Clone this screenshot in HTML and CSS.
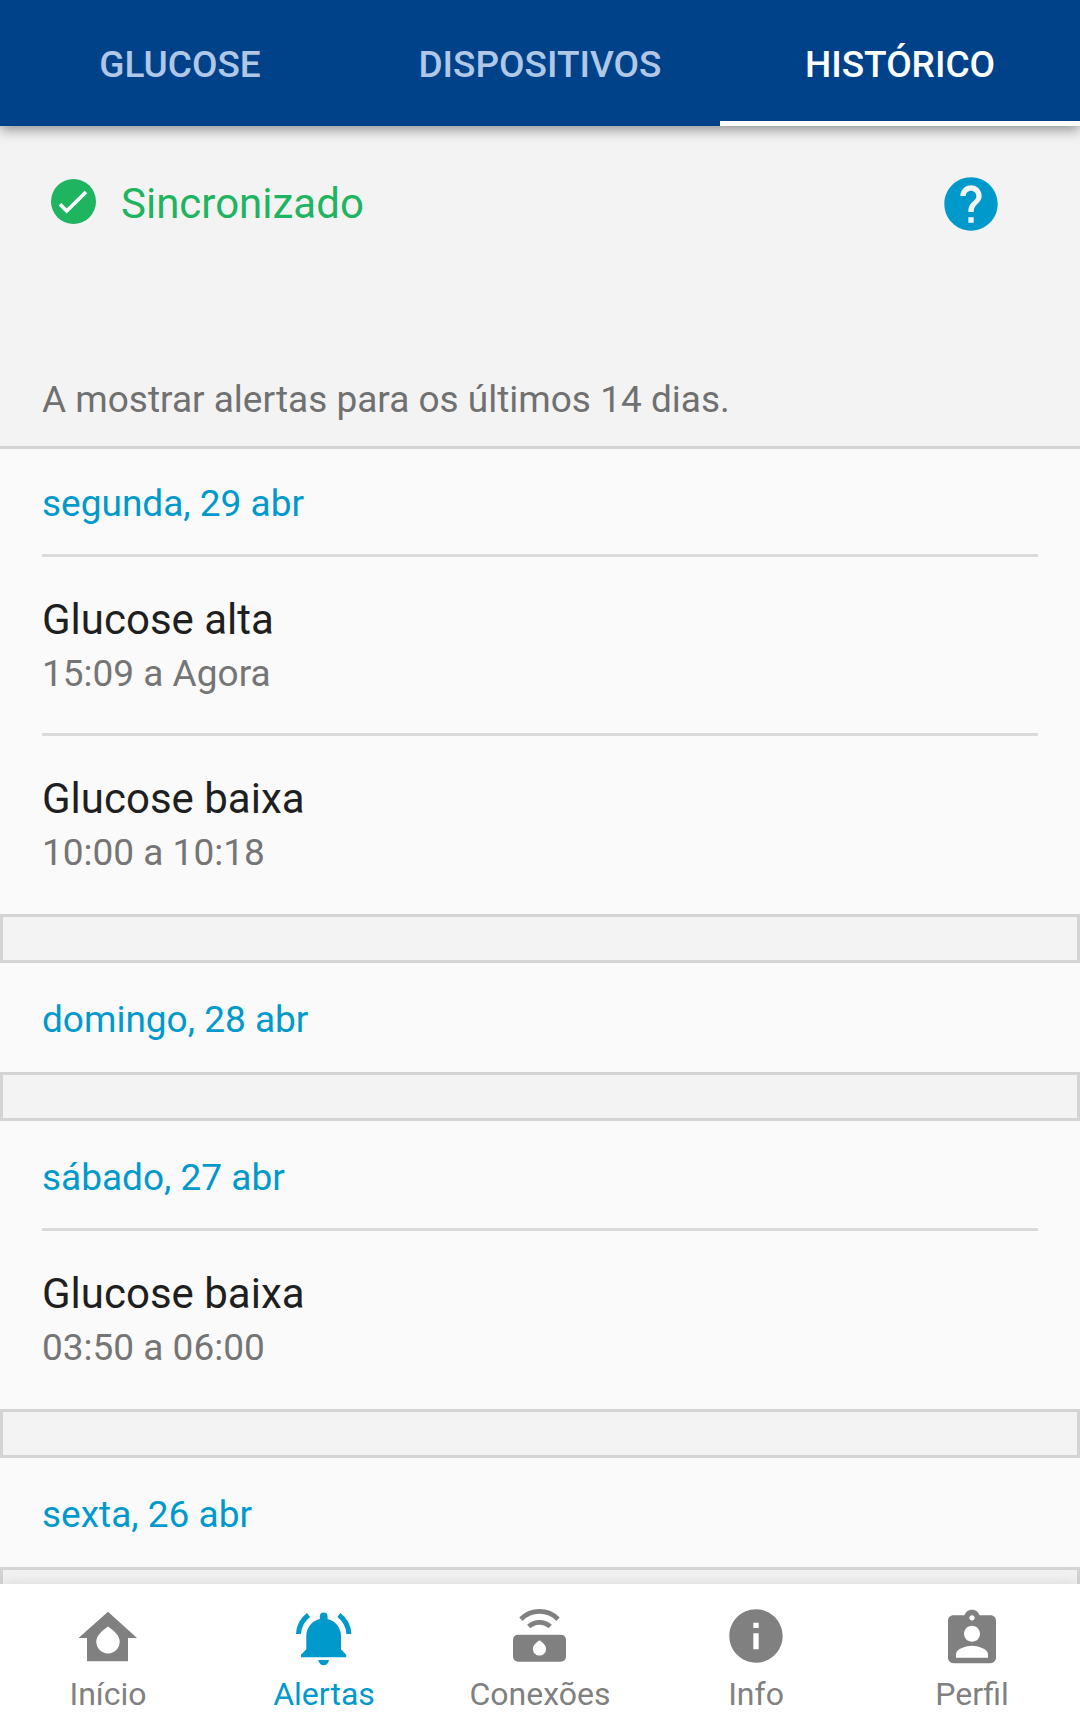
FILE: index.html
```html
<!DOCTYPE html>
<html lang="pt">
<head>
  <meta charset="utf-8">
  <meta name="viewport" content="width=device-width, initial-scale=1">
  <title>Alertas – Histórico</title>
  <link rel="stylesheet" href="styles.css">
</head>
<body>
  <div class="app">
    <nav class="tabs" aria-label="Alertas">
      <a class="tab" href="#glucose">GLUCOSE</a>
      <a class="tab" href="#dispositivos">DISPOSITIVOS</a>
      <a class="tab tab--active" href="#historico" aria-current="page">HISTÓRICO</a>
    </nav>

    <main class="content">
      <header class="summary">
        <div class="status">
          <svg class="status__icon" viewBox="0 0 56 64" aria-hidden="true">
            <circle cx="27.5" cy="29.5" r="22.5" fill="#1eb460"/>
            <path d="M14 32.3l6.7 6.7L40 20" fill="none" stroke="#fff" stroke-width="3.6"/>
          </svg>
          <span class="status__text">Sincronizado</span>
          <button class="help" type="button" aria-label="Ajuda">
            <svg class="icon" viewBox="0 0 24 24" aria-hidden="true">
              <path fill="currentColor" d="M12 2C6.480 2 2 6.480 2 12s4.480 10 10 10 10-4.480 10-10S17.520 2 12 2zm1 17h-2v-2h2v2zm2.070-7.750l-.9.920C13.450 12.900 13 13.500 13 15h-2v-.5c0-1.100.450-2.100 1.170-2.830l1.240-1.260c.370-.360.590-.860.590-1.410 0-1.100-.9-2-2-2s-2 .9-2 2H8c0-2.210 1.790-4 4-4s4 1.790 4 4c0 .880-.360 1.680-.930 2.250z"/>
            </svg>
          </button>
        </div>
        <p class="notice">A mostrar alertas para os últimos 14 dias.</p>
      </header>

      <section class="day">
        <h2 class="day__title">segunda, 29 abr</h2>
        <ul class="events">
          <li class="event">
            <h3 class="event__name">Glucose alta</h3>
            <p class="event__time">15:09 a Agora</p>
          </li>
          <li class="event">
            <h3 class="event__name">Glucose baixa</h3>
            <p class="event__time">10:00 a 10:18</p>
          </li>
        </ul>
      </section>

      <section class="day">
        <h2 class="day__title">domingo, 28 abr</h2>
      </section>

      <section class="day">
        <h2 class="day__title">sábado, 27 abr</h2>
        <ul class="events">
          <li class="event">
            <h3 class="event__name">Glucose baixa</h3>
            <p class="event__time">03:50 a 06:00</p>
          </li>
        </ul>
      </section>

      <section class="day">
        <h2 class="day__title">sexta, 26 abr</h2>
      </section>
    </main>

    <nav class="bottom" aria-label="Principal">
      <a class="bottom__item" href="#inicio">
        <svg class="icon" viewBox="0 0 64 64" aria-hidden="true">
          <path fill="currentColor" fill-rule="evenodd" d="M32 7.700L61 34h-9v23.300H11V34H2.500zM32 22.500c-5 3.500-11.700 8.500-11.700 15.200a11.700 11.700 0 0 0 23.400 0C43.700 31 37 26 32 22.500z"/>
        </svg>
        <span>Início</span>
      </a>
      <a class="bottom__item bottom__item--active" href="#alertas" aria-current="page">
        <svg class="icon" viewBox="0 0 64 64" aria-hidden="true">
          <path fill="currentColor" d="M27.800 12.500a3.900 3.900 0 0 1 7.800 0v2.600C43.500 17 49 24 49 32v13.300l5.200 5.400v2.600H9v-2.600l5.300-5.400V32c0-8 5.500-15 13.500-16.900zM26.300 56h10.800c-.8 3.500-2.900 5.300-5.400 5.300S27 59.500 26.300 56z"/>
          <path fill="none" stroke="currentColor" stroke-width="5" d="M16.500 11C10.500 15.500 6.900 22 6.500 30M46.900 11C52.900 15.500 56.500 22 56.900 30"/>
        </svg>
        <span>Alertas</span>
      </a>
      <a class="bottom__item" href="#conexoes">
        <svg class="icon" viewBox="0 0 64 64" aria-hidden="true">
          <path fill="currentColor" fill-rule="evenodd" d="M10 30.700h43a5 5 0 0 1 5 5v17a5 5 0 0 1-5 5H10a5 5 0 0 1-5-5v-17a5 5 0 0 1 5-5zM31.500 36.300c-2.800 2-6.600 4.800-6.600 8.700a6.600 6.600 0 0 0 13.200 0c0-3.900-3.800-6.700-6.600-8.700z"/>
          <path fill="none" stroke="currentColor" stroke-width="4.800" d="M13 15.200a26 26 0 0 1 37 0M20.800 22.600a15.500 15.500 0 0 1 21.400 0"/>
        </svg>
        <span>Conexões</span>
      </a>
      <a class="bottom__item" href="#info">
        <svg class="icon" viewBox="0 0 24 24" aria-hidden="true">
          <path fill="currentColor" d="M12 2C6.480 2 2 6.480 2 12s4.480 10 10 10 10-4.480 10-10S17.520 2 12 2zm1 15h-2v-6h2v6zm0-8h-2V7h2v2z"/>
        </svg>
        <span>Info</span>
      </a>
      <a class="bottom__item" href="#perfil">
        <svg class="icon" viewBox="0 -1.200 24 24" aria-hidden="true">
          <path fill="currentColor" d="M19 3h-4.180C14.400 1.840 13.300 1 12 1c-1.300 0-2.400.840-2.820 2H5c-1.100 0-2 .9-2 2v14c0 1.100.9 2 2 2h14c1.100 0 2-.9 2-2V5c0-1.100-.9-2-2-2zm-7 0c.550 0 1 .450 1 1s-.450 1-1 1-1-.450-1-1 .450-1 1-1zm0 4c1.660 0 3 1.340 3 3s-1.340 3-3 3-3-1.340-3-3 1.340-3 3-3zm6 12H6v-1.400c0-2 4-3.100 6-3.100s6 1.100 6 3.100V19z"/>
        </svg>
        <span>Perfil</span>
      </a>
    </nav>
  </div>
</body>
</html>
```
FILE: styles.css
```css
:root {
  --navy: #00428a;
  --cyan: #0099cc;
  --green: #1eb460;
  --line: #d4d4d4;
  --panel: #f3f3f3;
  --gutter: 42px;
}

*,
*::after {
  box-sizing: border-box;
}

body,
h2,
h3,
p,
ul {
  margin: 0;
  padding: 0;
}

body {
  font-family: Roboto, "Noto Sans", sans-serif;
  font-size: 37px;
  line-height: 48px;
  font-weight: 400;
  background: #fafafa;
}

h2,
h3 {
  font-weight: 400;
}

a {
  color: inherit;
  text-decoration: none;
}

.app {
  display: flex;
  flex-direction: column;
  height: 100vh;
}

.icon {
  display: block;
  width: 64px;
  height: 64px;
}

/* Top tabs */
.tabs {
  display: flex;
  flex: none;
  z-index: 1;
  background: var(--navy);
  box-shadow: 0 4px 12px rgba(0, 0, 0, 0.4);
}

.tab {
  flex: 1;
  padding: 41px 0 32px;
  border-bottom: 5px solid transparent;
  color: #b0c7e6;
  font-weight: 500;
  text-align: center;
}

.tab--active {
  border-bottom-color: #fff;
  color: #fff;
}

/* Scrolling history */
.content {
  flex: 1;
  min-height: 0;
  overflow-y: auto;
  scrollbar-width: none;
}

.summary {
  display: flex;
  flex-direction: column;
  gap: 140px;
  padding: 46px 0 22px;
  border-bottom: 3px solid var(--line);
  background: var(--panel);
}

.status {
  display: flex;
  align-items: center;
  gap: 19px;
  padding: 0 77px 0 46px;
}

.status__icon {
  width: 56px;
  height: 64px;
}

.status__text {
  flex: 1;
  color: var(--green);
  font-size: 42px;
  line-height: 54px;
}

.help {
  padding: 0;
  border: 0;
  background: none;
  color: var(--cyan);
}

.notice {
  padding: 0 var(--gutter);
  color: #707070;
}

.day::after {
  content: "";
  display: block;
  height: 49px;
  margin: 2px 0;
  border: 3px solid var(--line);
  background: var(--panel);
}

.day__title {
  padding: 31px var(--gutter) 26px;
  color: var(--cyan);
  font-size: 37px;
}

.events {
  padding: 0 var(--gutter);
  list-style: none;
}

.event {
  display: flex;
  flex-direction: column;
  gap: 3px;
  padding: 36px 0 35px;
  border-top: 3px solid #dadada;
}

.event__name {
  color: #1f1f1f;
  font-size: 42px;
  line-height: 54px;
}

.event__time {
  color: #757575;
}

/* Bottom navigation */
.bottom {
  display: flex;
  flex: none;
  z-index: 1;
  padding: 20px 0 17px;
  background: #fff;
  box-shadow: 0 0 16px rgba(0, 0, 0, 0.12);
}

.bottom__item {
  display: flex;
  flex: 1;
  flex-direction: column;
  align-items: center;
  gap: 6px;
  color: #808080;
  font-size: 32px;
  line-height: 40px;
}

.bottom__item--active {
  color: var(--cyan);
}
```
